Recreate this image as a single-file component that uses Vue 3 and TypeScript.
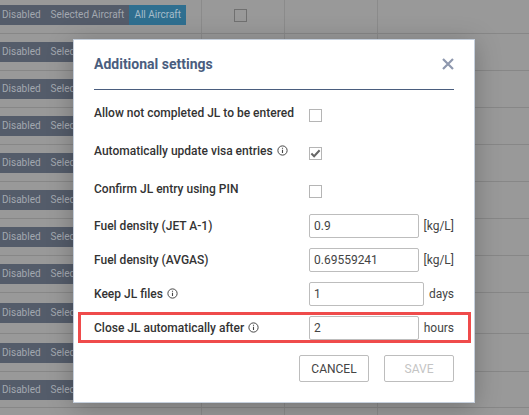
<script setup lang="ts">
const rowHeights = [37, 37, 37, 37, 37, 37, 37, 37, 41, 38, 36, 37]
const fields = [
  { label: 'Fuel density (JET A-1)', value: '0.9', unit: '[kg/L]', info: false, wide: false, hl: false },
  { label: 'Fuel density (AVGAS)', value: '0.69559241', unit: '[kg/L]', info: false, wide: false, hl: false },
  { label: 'Keep JL files', value: '1', unit: 'days', info: true, wide: true, hl: false },
  { label: 'Close JL automatically after', value: '2', unit: 'hours', info: true, wide: false, hl: true },
]
const checks = [
  { label: 'Allow not completed JL to be entered', info: false, on: false },
  { label: 'Automatically update visa entries', info: true, on: true },
  { label: 'Confirm JL entry using PIN', info: false, on: false },
]
</script>

<template>
  <div class="page">
    <div class="table">
      <div v-for="(h, r) in rowHeights" :key="r" class="row" :style="{ height: h + 'px' }">
        <div class="c1">
          <div v-if="r < 11" class="pill">
            <span class="seg">Disabled</span>
            <span class="seg">Selected Aircraft</span>
            <span class="seg active">All Aircraft</span>
          </div>
        </div>
        <div class="c2"><span v-if="r === 0" class="bgcheck"></span></div>
        <div class="c3"></div>
        <div class="c4"></div>
      </div>
    </div>
    <div class="modal">
      <header class="head">
        <h2>Additional settings</h2>
        <svg class="close" width="12" height="12" viewBox="0 0 12 12"><path d="M1 1l10 10M11 1L1 11" stroke="#8e98ae" stroke-width="2.2" fill="none" /></svg>
      </header>
      <div class="checks">
        <div v-for="c in checks" :key="c.label" class="check-row">
          <label>{{ c.label }}
            <svg v-if="c.info" class="info" width="11" height="11" viewBox="0 0 10 10"><circle cx="5" cy="5" r="4.2" fill="none" stroke="#444" stroke-width=".9" /><path d="M5 4.3v3M5 2.4v1" stroke="#444" stroke-width="1" /></svg>
          </label>
          <span class="box">
            <svg v-if="c.on" width="11" height="11" viewBox="0 0 12 12"><path d="M1.5 6l3 3 6-6.5" stroke="#666" stroke-width="2.2" fill="none" /></svg>
          </span>
        </div>
      </div>
      <div class="fields">
        <div v-for="f in fields" :key="f.label" class="field" :class="{ hl: f.hl }">
          <label>{{ f.label }}
            <svg v-if="f.info" class="info" width="11" height="11" viewBox="0 0 10 10"><circle cx="5" cy="5" r="4.2" fill="none" stroke="#444" stroke-width=".9" /><path d="M5 4.3v3M5 2.4v1" stroke="#444" stroke-width="1" /></svg>
          </label>
          <input class="input" :class="{ wide: f.wide }" :value="f.value" readonly />
          <span class="unit">{{ f.unit }}</span>
        </div>
      </div>
      <footer class="foot">
        <button class="btn">CANCEL</button>
        <button class="btn disabled">SAVE</button>
      </footer>
    </div>
  </div>
</template>

<style>
html, body { margin: 0; background: #999; }
</style>

<style scoped>
.page {
  position: relative;
  width: 529px;
  height: 415px;
  overflow: hidden;
  background: #999;
  font-family: Roboto, "Liberation Sans", sans-serif;
}
.table { display: flex; flex-direction: column; margin-top: -4px; }
.row {
  display: grid;
  grid-template-columns: 202px 83px 93px 1fr;
  box-sizing: border-box;
  border-top: 1px solid #878787;
  flex: none;
}
.row > div { display: flex; align-items: center; }
.c1, .c2, .c3 { border-right: 1px solid #8b8b8b; }
.c2 { justify-content: center; }
.pill {
  display: flex;
  height: 20px;
  background: #545c6a;
  border-radius: 0 2px 2px 0;
  font-size: 10px;
  line-height: 20px;
  color: #a3a8b0;
}
.seg { padding: 0 5px 0 2px; white-space: nowrap; }
.seg + .seg { padding: 0 5px; }
.seg.active { background: #2f6f90; color: #a5bcc9; }
.bgcheck { width: 11px; height: 11px; border: 1px solid #707070; margin-right: 6px; }

.modal {
  position: absolute;
  left: 73px;
  top: 39px;
  width: 360px;
  height: 362px;
  padding: 0 20px;
  background: #fff;
  border: 1px solid #c5cfdc;
  box-shadow: 0 4px 24px rgba(0, 0, 0, .25);
}
.head {
  display: flex;
  justify-content: space-between;
  align-items: center;
  padding-bottom: 2px;
  height: 47px;
  border-bottom: 1px solid #4a5d7e;
}
.head h2 { margin: 0; font-size: 14px; font-weight: 700; color: #4a5d7e; }
label { font-size: 12px; font-weight: 500; color: #333; }
.info { vertical-align: -1px; margin-left: 1px; }
.checks { padding-top: 6px; }
.check-row { display: flex; align-items: center; height: 38px; }
.check-row label { width: 215px; flex: none; margin-top: -5px; }
.box {
  width: 11px; height: 11px;
  border: 1px solid #b5b5b5;
  display: flex; align-items: center; justify-content: center;
}
.fields { display: flex; flex-direction: column; margin-top: -1px; }
.field { display: flex; align-items: center; height: 34px; position: relative; }
.field label { width: 215px; flex: none; }
.input {
  width: 104px; height: 22px; box-sizing: content-box;
  border: 1px solid #bdbdbd; border-radius: 2px;
  padding: 0 0 0 4px; margin: 0;
  font: 400 12px Roboto, sans-serif; color: #444; outline: none;
}
.input.wide { width: 109px; }
.unit { font-size: 12px; color: #444; margin-left: auto; }
.hl::after {
  content: "";
  position: absolute;
  left: -16px; right: -17px; top: 1px; bottom: 2px;
  border: 3px solid #ef4b4b;
  pointer-events: none;
}
.foot { display: flex; justify-content: flex-end; gap: 15px; margin-top: 10px; }
.btn {
  width: 70px; height: 27px; box-sizing: border-box;
  background: #fff; border: 1px solid #bdbdbd; border-radius: 2px;
  font: 400 12px Roboto, sans-serif; color: #444; padding: 0;
}
.btn.disabled { color: #c4c4c4; }
</style>
